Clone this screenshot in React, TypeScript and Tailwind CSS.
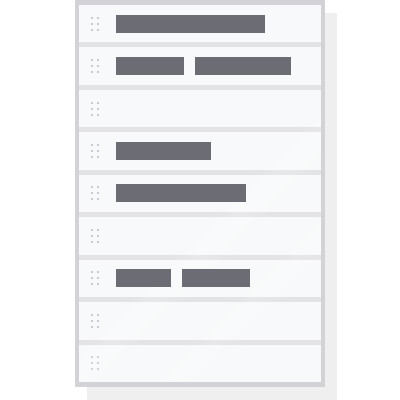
import React from "react";

const rows: number[][] = [
  [149],
  [68, 96],
  [],
  [95],
  [130],
  [],
  [55, 68],
  [],
  [],
];

function Handle() {
  return (
    <div className="grid grid-cols-2 gap-x-[4px] gap-y-[4px] w-[8px]">
      {Array.from({ length: 6 }).map((_, i) => (
        <div key={i} className="w-[2px] h-[2px] rounded-full bg-[#babac0]" />
      ))}
    </div>
  );
}

export default function App() {
  return (
    <div className="w-[400px] h-[400px] bg-white overflow-hidden">
      <div className="relative mx-auto w-[250px] h-[387px] border-x-[4px] border-t-[5px] border-b-[5px] border-[#d3d3d7] bg-[#e3e3e6] shadow-[12px_13px_0_0_#efefef] flex flex-col gap-[5px]">
        {rows.map((bars, i) => (
          <div
            key={i}
            className="flex-1 flex items-center bg-[#f8f9fa] pl-[12px]"
          >
            <Handle />
            <div className="relative z-10 flex items-center gap-[11px] ml-[17px]">
              {bars.map((w, j) => (
                <div
                  key={j}
                  className="h-[18px] bg-[#6c6c74]"
                  style={{ width: w }}
                />
              ))}
            </div>
          </div>
        ))}
        <div className="pointer-events-none absolute inset-0 bg-[linear-gradient(135deg,transparent_0%,transparent_55%,rgba(255,255,255,0.18)_60%,transparent_66%,transparent_72%,rgba(255,255,255,0.15)_76%,transparent_82%)]" />
      </div>
    </div>
  );
}
